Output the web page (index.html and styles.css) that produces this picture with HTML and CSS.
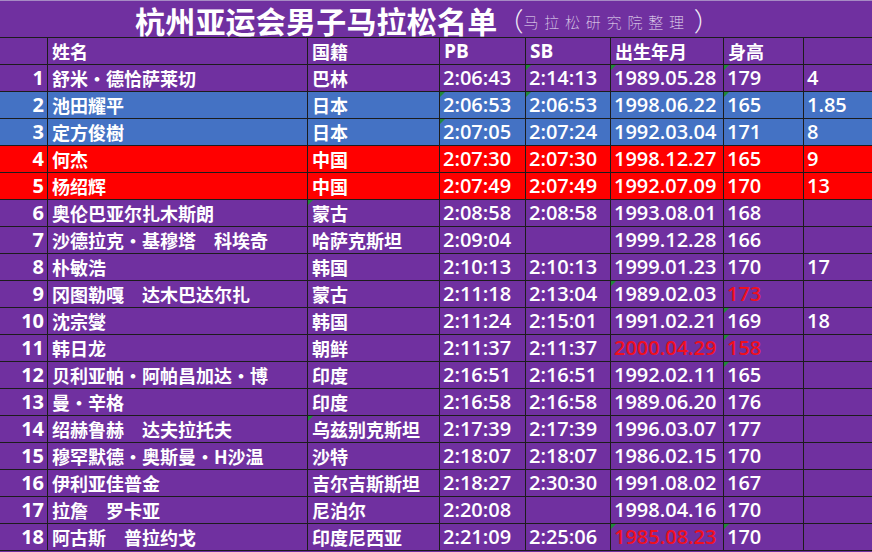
FILE: index.html
```html
<!DOCTYPE html>
<html lang="zh-CN">
<head>
<meta charset="utf-8">
<title>杭州亚运会男子马拉松名单</title>
<link rel="stylesheet" href="styles.css">
</head>
<body>
<div class="sheet">
  <div class="title-row">
    <span class="title">杭州亚运会男子马拉松名单</span>
    <span class="paren">（</span>
    <span class="sub">马拉松研究院整理</span>
    <span class="paren">）</span>
  </div>

  <div class="row purple head">
    <div class="c n"></div><div class="c zh">姓名</div><div class="c zh">国籍</div>
    <div class="c lat">PB</div><div class="c lat">SB</div><div class="c zh">出生年月</div><div class="c zh">身高</div><div class="c last"></div>
  </div>

  <div class="row purple">
    <div class="c n">1</div><div class="c zh">舒米·德恰萨莱切</div><div class="c zh">巴林</div>
    <div class="c num">2:06:43</div><div class="c num flag">2:14:13</div><div class="c num flag">1989.05.28</div><div class="c num flag">179</div><div class="c num last">4</div>
  </div>
  <div class="row blue">
    <div class="c n">2</div><div class="c zh">池田耀平</div><div class="c zh">日本</div>
    <div class="c num flag">2:06:53</div><div class="c num flag">2:06:53</div><div class="c num">1998.06.22</div><div class="c num flag">165</div><div class="c num last">1.85</div>
  </div>
  <div class="row blue">
    <div class="c n">3</div><div class="c zh">定方俊樹</div><div class="c zh">日本</div>
    <div class="c num flag">2:07:05</div><div class="c num">2:07:24</div><div class="c num">1992.03.04</div><div class="c num">171</div><div class="c num last">8</div>
  </div>
  <div class="row red">
    <div class="c n">4</div><div class="c zh">何杰</div><div class="c zh">中国</div>
    <div class="c num">2:07:30</div><div class="c num">2:07:30</div><div class="c num">1998.12.27</div><div class="c num">165</div><div class="c num last">9</div>
  </div>
  <div class="row red">
    <div class="c n">5</div><div class="c zh">杨绍辉</div><div class="c zh">中国</div>
    <div class="c num">2:07:49</div><div class="c num">2:07:49</div><div class="c num">1992.07.09</div><div class="c num">170</div><div class="c num last">13</div>
  </div>
  <div class="row purple">
    <div class="c n">6</div><div class="c zh">奥伦巴亚尔扎木斯朗</div><div class="c zh flag">蒙古</div>
    <div class="c num">2:08:58</div><div class="c num">2:08:58</div><div class="c num">1993.08.01</div><div class="c num">168</div><div class="c num last"></div>
  </div>
  <div class="row purple">
    <div class="c n">7</div><div class="c zh">沙德拉克·基穆塔　科埃奇</div><div class="c zh">哈萨克斯坦</div>
    <div class="c num">2:09:04</div><div class="c num"></div><div class="c num">1999.12.28</div><div class="c num">166</div><div class="c num last"></div>
  </div>
  <div class="row purple">
    <div class="c n">8</div><div class="c zh">朴敏浩</div><div class="c zh">韩国</div>
    <div class="c num">2:10:13</div><div class="c num">2:10:13</div><div class="c num">1999.01.23</div><div class="c num">170</div><div class="c num last">17</div>
  </div>
  <div class="row purple">
    <div class="c n">9</div><div class="c zh">冈图勒嘎　达木巴达尔扎</div><div class="c zh">蒙古</div>
    <div class="c num">2:11:18</div><div class="c num">2:13:04</div><div class="c num flag">1989.02.03</div><div class="c num warn">173</div><div class="c num last"></div>
  </div>
  <div class="row purple">
    <div class="c n">10</div><div class="c zh">沈宗燮</div><div class="c zh">韩国</div>
    <div class="c num">2:11:24</div><div class="c num">2:15:01</div><div class="c num">1991.02.21</div><div class="c num flag">169</div><div class="c num last">18</div>
  </div>
  <div class="row purple">
    <div class="c n">11</div><div class="c zh">韩日龙</div><div class="c zh">朝鲜</div>
    <div class="c num">2:11:37</div><div class="c num">2:11:37</div><div class="c num warn">2000.04.29</div><div class="c num flag warn">158</div><div class="c num last"></div>
  </div>
  <div class="row purple">
    <div class="c n">12</div><div class="c zh">贝利亚帕·阿帕昌加达·博</div><div class="c zh">印度</div>
    <div class="c num">2:16:51</div><div class="c num">2:16:51</div><div class="c num">1992.02.11</div><div class="c num flag">165</div><div class="c num last"></div>
  </div>
  <div class="row purple">
    <div class="c n">13</div><div class="c zh">曼·辛格</div><div class="c zh">印度</div>
    <div class="c num">2:16:58</div><div class="c num">2:16:58</div><div class="c num">1989.06.20</div><div class="c num">176</div><div class="c num last"></div>
  </div>
  <div class="row purple">
    <div class="c n">14</div><div class="c zh">绍赫鲁赫　达夫拉托夫</div><div class="c zh flag">乌兹别克斯坦</div>
    <div class="c num">2:17:39</div><div class="c num">2:17:39</div><div class="c num">1996.03.07</div><div class="c num">177</div><div class="c num last"></div>
  </div>
  <div class="row purple">
    <div class="c n">15</div><div class="c zh">穆罕默德·奥斯曼·H沙温</div><div class="c zh">沙特</div>
    <div class="c num">2:18:07</div><div class="c num">2:18:07</div><div class="c num">1986.02.15</div><div class="c num">170</div><div class="c num last"></div>
  </div>
  <div class="row purple">
    <div class="c n">16</div><div class="c zh">伊利亚佳普金</div><div class="c zh">吉尔吉斯斯坦</div>
    <div class="c num">2:18:27</div><div class="c num">2:30:30</div><div class="c num">1991.08.02</div><div class="c num">167</div><div class="c num last"></div>
  </div>
  <div class="row purple">
    <div class="c n">17</div><div class="c zh">拉詹　罗卡亚</div><div class="c zh">尼泊尔</div>
    <div class="c num">2:20:08</div><div class="c num"></div><div class="c num">1998.04.16</div><div class="c num">170</div><div class="c num last"></div>
  </div>
  <div class="row purple">
    <div class="c n">18</div><div class="c zh">阿古斯　普拉约戈</div><div class="c zh">印度尼西亚</div>
    <div class="c num">2:21:09</div><div class="c num">2:25:06</div><div class="c num flag warn">1985.08.23</div><div class="c num flag">170</div><div class="c num last"></div>
  </div>
</div>
</body>
</html>
```
FILE: styles.css
```css
* { box-sizing: border-box; }
html, body { margin: 0; padding: 0; }
body {
  width: 872px;
  height: 552px;
  overflow: hidden;
  background: #7030a0;
  color: #ffffff;
  font-family: "Open Sans", "Noto Sans CJK SC", sans-serif;
}
.sheet { width: 872px; }

.title-row {
  height: 38px;
  display: flex;
  align-items: center;
  padding-left: 135px;
  padding-top: 2px;
  background: #7030a0;
  border-top: 1px solid #a68bc4;
  border-bottom: 1px solid #1c1c1c;
  white-space: nowrap;
}
.title {
  font-family: "Noto Sans CJK SC", sans-serif;
  font-weight: 700;
  font-size: 30px;
  line-height: 34px;
  letter-spacing: 0.2px;
}
.paren {
  font-family: "Noto Sans CJK SC", sans-serif;
  font-weight: 300;
  font-size: 26px;
  line-height: 30px;
  color: #f1ecf7;
}
.sub {
  font-family: "Noto Sans CJK SC", sans-serif;
  font-weight: 100;
  font-size: 15px;
  letter-spacing: 5.8px;
  line-height: 20px;
  margin-top: 4px;
  margin-right: 4px;
  color: #eee6f6;
}

.row {
  display: grid;
  grid-template-columns: 48px 260px 132px 86px 85px 113px 80px 68px;
  height: 27px;
}
.purple { background: #7030a0; }
.blue { background: #4472c4; }
.red { background: #ff0000; }

.c {
  position: relative;
  height: 27px;
  border-right: 1px solid #1c1c1c;
  border-bottom: 1px solid #1c1c1c;
  padding-left: 4px;
  white-space: nowrap;
  overflow: hidden;
  line-height: 26px;
}
.c.last { border-right: none; }

.n {
  text-align: right;
  padding-left: 0;
  padding-right: 3px;
  font-family: "Open Sans", sans-serif;
  font-weight: 700;
  font-size: 20px;
}
.zh {
  font-family: "Noto Sans CJK SC", sans-serif;
  font-weight: 700;
  font-size: 18px;
}
.lat {
  font-family: "Open Sans", sans-serif;
  font-weight: 700;
  font-size: 19px;
}
.num {
  font-family: "Open Sans", sans-serif;
  font-weight: 600;
  font-size: 20px;
  padding-left: 3px;
}
.warn { color: #f0101e; }

.flag::before {
  content: "";
  position: absolute;
  left: 0;
  top: 0;
  width: 0;
  height: 0;
  border-top: 5px solid #1f8a3a;
  border-right: 5px solid transparent;
}
```
